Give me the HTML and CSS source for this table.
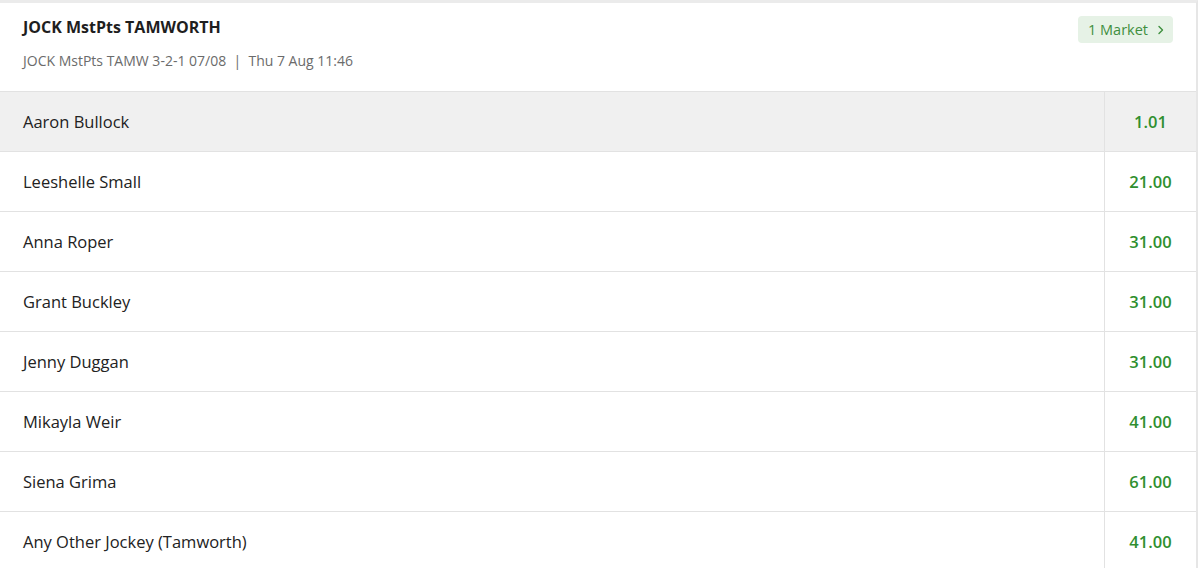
FILE: index.html
```html
<!DOCTYPE html>
<html lang="en">
<head>
<meta charset="utf-8">
<link rel="stylesheet" href="styles.css">
</head>
<body>
<div class="card">
  <div class="header">
    <div class="header-text">
      <div class="title">JOCK MstPts TAMWORTH</div>
      <div class="subtitle">JOCK MstPts TAMW 3-2-1 07/08 &nbsp;|&nbsp; Thu 7 Aug 11:46</div>
    </div>
    <div class="market-btn">1 Market <svg class="chev" width="8" height="10" viewBox="0 0 8 10"><path d="M2 1.5 L5.5 5 L2 8.5" fill="none" stroke="currentColor" stroke-width="1.4" stroke-linecap="round" stroke-linejoin="round"/></svg></div>
  </div>
  <div class="row selected"><div class="name">Aaron Bullock</div><div class="odds">1.01</div></div>
  <div class="row"><div class="name">Leeshelle Small</div><div class="odds">21.00</div></div>
  <div class="row"><div class="name">Anna Roper</div><div class="odds">31.00</div></div>
  <div class="row"><div class="name">Grant Buckley</div><div class="odds">31.00</div></div>
  <div class="row"><div class="name">Jenny Duggan</div><div class="odds">31.00</div></div>
  <div class="row"><div class="name">Mikayla Weir</div><div class="odds">41.00</div></div>
  <div class="row"><div class="name">Siena Grima</div><div class="odds">61.00</div></div>
  <div class="row"><div class="name">Any Other Jockey (Tamworth)</div><div class="odds">41.00</div></div>
</div>
</body>
</html>
```
FILE: styles.css
```css
* { box-sizing: border-box; }
html, body {
  margin: 0;
  padding: 0;
  background: #ffffff;
  font-family: "Open Sans", "Liberation Sans", sans-serif;
  color: #222;
}
.card {
  width: 1198px;
  border-top: 3px solid #ebebeb;
  border-right: 2px solid #e6e6e6;
  background: #fff;
}
.header {
  height: 89px;
  display: flex;
  justify-content: space-between;
  align-items: flex-start;
  padding: 13px 23px 0 23px;
  border-bottom: 1px solid #e2e2e2;
}
.title {
  font-size: 16px;
  font-weight: 700;
  color: #1e1e1e;
  line-height: 22px;
}
.subtitle {
  margin-top: 13px;
  font-size: 14px;
  color: #6b6b6b;
  line-height: 20px;
}
.market-btn {
  height: 27px;
  display: flex;
  align-items: center;
  gap: 9px;
  padding: 0 8px 0 10px;
  background: #e6f2e6;
  color: #3f8f3f;
  border-radius: 4px;
  font-size: 14.5px;
}
.chev { color: #3f8f3f; }
.row {
  height: 60px;
  display: flex;
  border-bottom: 1px solid #e2e2e2;
}
.row.selected { background: #f0f0f0; }
.name {
  flex: 1;
  display: flex;
  align-items: center;
  padding-left: 23px;
  font-size: 16.5px;
  color: #222;
}
.odds {
  width: 92px;
  display: flex;
  align-items: center;
  justify-content: center;
  border-left: 1px solid #e2e2e2;
  font-size: 16.5px;
  font-weight: 600;
  color: #2f8f2f;
}
```
